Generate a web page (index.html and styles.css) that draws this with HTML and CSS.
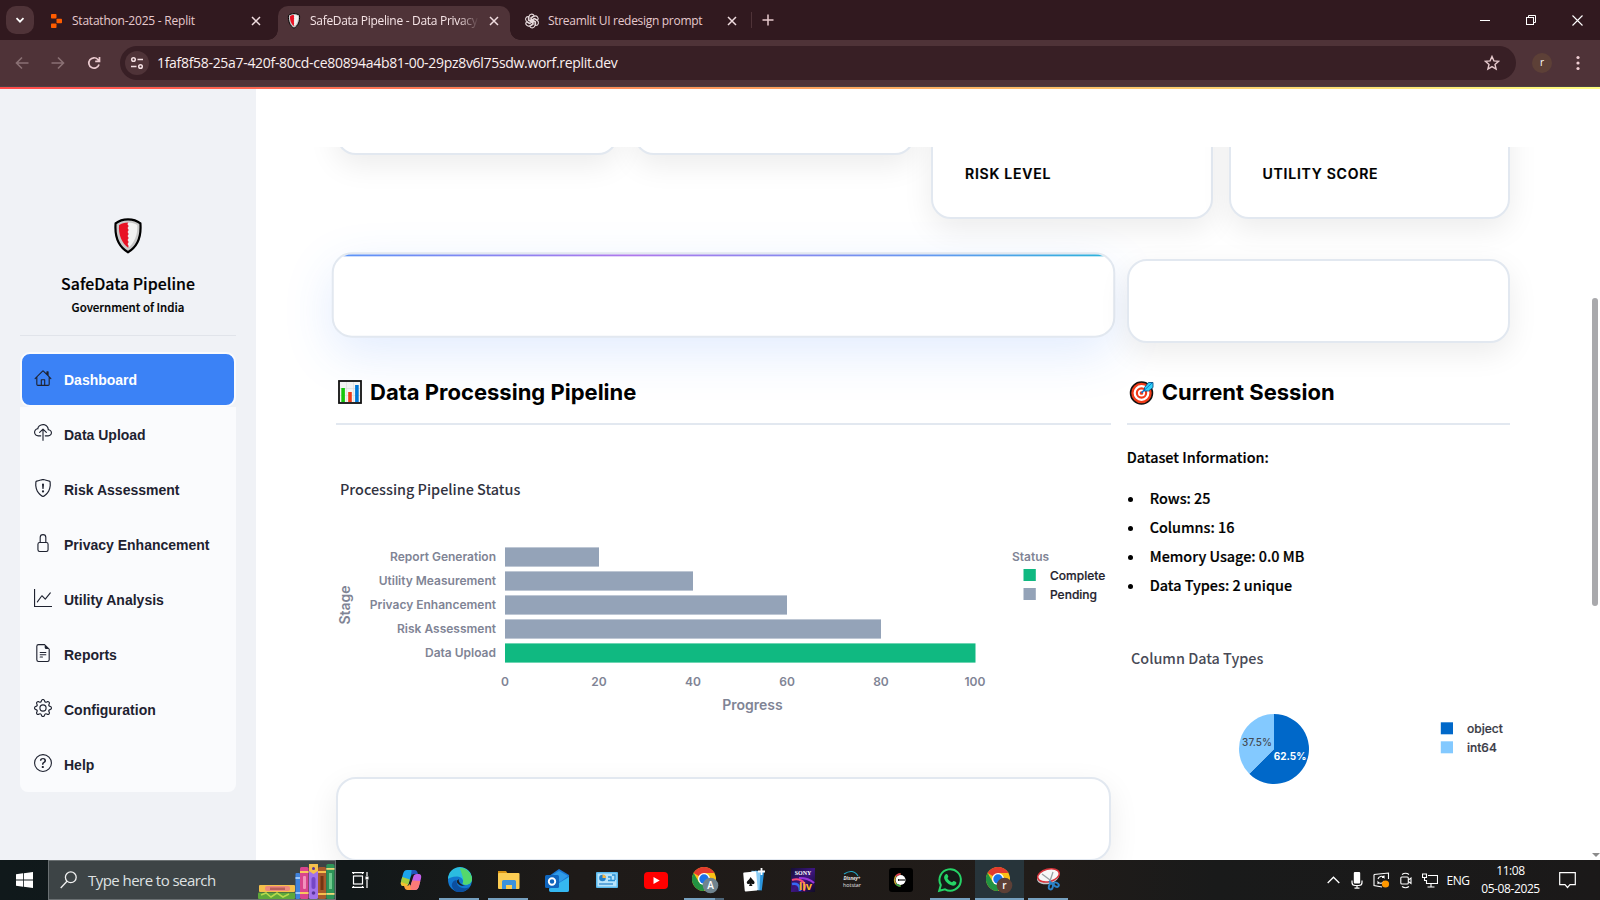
FILE: index.html
```html
<!DOCTYPE html>
<html lang="en">
<head>
<meta charset="utf-8">
<title>SafeData Pipeline - Data Privacy</title>
<link rel="stylesheet" href="styles.css">
</head>
<body>
<svg width="0" height="0" class="defs">
  <defs>
    <symbol id="shield" viewBox="0 0 28 36">
      <path d="M14 1.3C10 1.3 5 2.6 1.6 5.4C.6 18 4.200 28.500 14 34.300C23.800 28.500 27.400 18 26.400 5.400C23 2.600 18 1.300 14 1.300Z" fill="#c9c9c9" stroke="#000" stroke-width="2.200"/>
      <path d="M14.500 4.500C10 4.500 7.500 5.500 5 7.200C4.400 16.500 7.500 25 14.500 30Z" fill="#e81224"/>
      <path d="M14 4.500C18 4.500 21 5.500 23.300 7.200C23.800 16.500 20.500 25 14 30l1-2-1.500-2 1.500-2-1.500-2 1.500-2-1.500-2 1.500-2-1.500-2 1.500-2-1.500-2 1.500-2-1.500-1.500Z" fill="#f2f2f2"/>
    </symbol>
    <symbol id="x" viewBox="0 0 10 10"><path d="M1 1l8 8M9 1l-8 8" stroke="currentColor" stroke-width="1.500" fill="none"/></symbol>
    <symbol id="chrome" viewBox="0 0 24 24">
      <circle cx="12" cy="12" r="12" fill="#fbc116"/>
      <path d="M12 12L1.600 6A12 12 0 0 1 22.400 6L12 6Z" fill="#e33b2e"/>
      <path d="M1.600 6A12 12 0 0 0 12 24L17.200 15L6.800 15Z" fill="#229342"/>
      <circle cx="12" cy="12" r="6" fill="#fff"/><circle cx="12" cy="12" r="4.700" fill="#1a73e8"/>
    </symbol>
  </defs>
</svg>

<header class="tabs">
  <div class="tab-search"><svg width="10" height="10" viewBox="0 0 10 10"><path d="M1.500 3.200L5 6.700l3.500-3.500" fill="none" stroke="#fff" stroke-width="1.700"/></svg></div>
  <div class="tab tab-first">
    <svg class="fav" width="16" height="16" viewBox="0 0 16 16"><g fill="#ff5c00"><rect x="3" y="1" width="5.500" height="4.600" rx=".8"/><rect x="8.500" y="5.700" width="5.500" height="4.600" rx=".8"/><rect x="3" y="10.400" width="5.500" height="4.600" rx=".8"/></g></svg>
    <span class="tab-title">Statathon-2025 - Replit</span>
    <svg class="close" width="10" height="10"><use href="#x"/></svg>
  </div>
  <div class="tab tab-active">
    <svg class="fav" width="16" height="16"><use href="#shield"/></svg>
    <span class="tab-title fade">SafeData Pipeline - Data Privacy</span>
    <svg class="close" width="10" height="10"><use href="#x"/></svg>
  </div>
  <div class="tab tab-third">
    <svg class="fav" width="16" height="16" viewBox="0 0 16 16" fill="none" stroke="#e8dcde" stroke-width="1.100"><g id="petals"><path d="M8 8.800L5 7.100V3.800a2.700 2.700 0 0 1 5.100-1.200L6.900 4.500V8"/><path d="M8 8.800L5 7.100V3.800a2.700 2.700 0 0 1 5.100-1.200L6.900 4.500V8" transform="rotate(60 8 8)"/><path d="M8 8.800L5 7.100V3.800a2.700 2.700 0 0 1 5.100-1.200L6.900 4.500V8" transform="rotate(120 8 8)"/><path d="M8 8.800L5 7.100V3.800a2.700 2.700 0 0 1 5.100-1.200L6.900 4.500V8" transform="rotate(180 8 8)"/><path d="M8 8.800L5 7.100V3.800a2.700 2.700 0 0 1 5.100-1.200L6.900 4.500V8" transform="rotate(240 8 8)"/><path d="M8 8.800L5 7.100V3.800a2.700 2.700 0 0 1 5.100-1.200L6.900 4.500V8" transform="rotate(300 8 8)"/></g></svg>
    <span class="tab-title">Streamlit UI redesign prompt</span>
    <svg class="close" width="10" height="10"><use href="#x"/></svg>
  </div>
  <svg class="newtab" width="12" height="12" viewBox="0 0 12 12"><path d="M6 .5v11M.5 6h11" stroke="#e6c9cd" stroke-width="1.500"/></svg>
  <div class="winctl">
    <svg width="10" height="12" viewBox="0 0 10 12"><path d="M0 6.500h10" stroke="#fff"/></svg>
    <svg width="12" height="12" viewBox="0 0 12 12" fill="none" stroke="#fff"><rect x="1.500" y="3.500" width="7" height="7"/><path d="M3.500 3.500v-2h7v7h-2"/></svg>
    <svg width="11" height="11" viewBox="0 0 11 11"><path d="M.5.5l10 10M10.500.5l-10 10" stroke="#fff" stroke-width="1.100"/></svg>
  </div>
</header>

<div class="toolbar">
  <svg class="nav-btn" width="14" height="14" viewBox="0 0 14 14" fill="none" stroke="#8a7074" stroke-width="1.600"><path d="M13.500 7H1.500M7 1.500L1.500 7 7 12.500"/></svg>
  <svg class="nav-btn" width="14" height="14" viewBox="0 0 14 14" fill="none" stroke="#8a7074" stroke-width="1.600"><path d="M.5 7h12M7 1.500L12.500 7 7 12.500"/></svg>
  <svg class="nav-btn" width="14" height="14" viewBox="0 0 14 14" fill="none" stroke="#eccbd0" stroke-width="1.700"><path d="M12 8.500A5.200 5.200 0 1 1 10.900 3.500L12.300 5M12.500 1v4.300H8.200"/></svg>
  <div class="address">
    <span class="site"><svg width="14" height="14" viewBox="0 0 14 14" fill="none" stroke="#f3dfe2" stroke-width="1.500"><circle cx="3.500" cy="3.500" r="1.800"/><path d="M7.500 3.500H13M1 10.500h5.500"/><circle cx="10.500" cy="10.500" r="1.800"/></svg></span>
    <span class="url">1faf8f58-25a7-420f-80cd-ce80894a4b81-00-29pz8v6l75sdw.worf.replit.dev</span>
    <svg class="star" width="16" height="16" viewBox="0 0 16 16"><path d="M8 1.500l1.900 4.400 4.700.4-3.600 3.100 1.100 4.700L8 11.600l-4.100 2.500L5 9.400 1.400 6.300l4.700-.4z" fill="none" stroke="#e6c9cd" stroke-width="1.400"/></svg>
  </div>
  <span class="avatar">r</span>
  <svg class="dots" width="4" height="16" viewBox="0 0 4 16" fill="#f0cfd4"><circle cx="2" cy="2.500" r="1.600"/><circle cx="2" cy="8" r="1.600"/><circle cx="2" cy="13.500" r="1.600"/></svg>
</div>
<div class="rainbow"></div>

<div class="page">
  <aside class="sidebar">
    <svg class="logo" width="28" height="36"><use href="#shield"/></svg>
    <div class="brand">SafeData Pipeline</div>
    <div class="gov">Government of India</div>
    <nav class="menu">
      <a class="item on"><svg viewBox="0 0 16 16"><path d="M8.707 1.500a1 1 0 0 0-1.414 0L.646 8.146a.5.5 0 0 0 .708.708L2 8.207V13.500A1.500 1.500 0 0 0 3.500 15h9a1.500 1.500 0 0 0 1.500-1.500V8.207l.646.647a.5.5 0 0 0 .708-.708L13 5.793V2.500a.5.5 0 0 0-.5-.5h-1a.5.5 0 0 0-.5.500v1.293zM13 7.207V13.500a.5.5 0 0 1-.5.500H10V9.500a.5.5 0 0 0-.5-.5h-3a.5.5 0 0 0-.5.500V14H3.500a.5.5 0 0 1-.5-.5V7.207l5-5zM7 14v-4h2v4z" fill-rule="evenodd"/></svg><span>Dashboard</span></a>
      <a class="item"><svg viewBox="0 0 16 16"><path fill-rule="evenodd" d="M4.406 1.342A5.530 5.530 0 0 1 8 0c2.690 0 4.923 2 5.166 4.579C14.758 4.804 16 6.137 16 7.773 16 9.569 14.502 11 12.687 11H10a.5.5 0 0 1 0-1h2.688C13.979 10 15 8.988 15 7.773c0-1.216-1.020-2.228-2.313-2.228h-.5v-.5C12.188 2.825 10.328 1 8 1a4.530 4.530 0 0 0-2.941 1.100c-.757.652-1.153 1.438-1.153 2.055v.448l-.445.049C2.064 4.805 1 5.952 1 7.318 1 8.785 2.230 10 3.781 10H6a.5.5 0 0 1 0 1H3.781C1.708 11 0 9.366 0 7.318c0-1.763 1.266-3.223 2.942-3.593.143-.863.698-1.723 1.464-2.383"/><path fill-rule="evenodd" d="M7.646 4.146a.5.5 0 0 1 .708 0l3 3a.5.5 0 0 1-.708.708L8.500 5.707V14.500a.5.5 0 0 1-1 0V5.707L5.354 7.854a.5.5 0 1 1-.708-.708z"/></svg><span>Data Upload</span></a>
      <a class="item"><svg viewBox="0 0 16 16"><path d="M5.338 1.590a61 61 0 0 0-2.837.856.480.480 0 0 0-.328.390c-.554 4.157.726 7.190 2.253 9.188a10.700 10.700 0 0 0 2.287 2.233c.346.244.652.420.893.533q.180.085.293.118a1 1 0 0 0 .101.025 1 1 0 0 0 .1-.025q.114-.034.294-.118c.240-.113.547-.290.893-.533a10.700 10.700 0 0 0 2.287-2.233c1.527-1.997 2.807-5.031 2.253-9.188a.480.480 0 0 0-.328-.390c-.651-.213-1.750-.560-2.837-.855C9.552 1.290 8.531 1.067 8 1.067c-.530 0-1.552.223-2.662.524zM5.072.560C6.157.265 7.310 0 8 0s1.843.265 2.928.560c1.110.300 2.229.655 2.887.870a1.540 1.540 0 0 1 1.044 1.262c.596 4.477-.787 7.795-2.465 9.990a11.800 11.800 0 0 1-2.517 2.453 7 7 0 0 1-1.048.625c-.280.132-.581.240-.829.240s-.548-.108-.829-.240a7 7 0 0 1-1.048-.625 11.800 11.800 0 0 1-2.517-2.453C1.928 10.487.545 7.169 1.141 2.692A1.540 1.540 0 0 1 2.185 1.430 63 63 0 0 1 5.072.560"/><path d="M7.001 11a1 1 0 1 1 2 0 1 1 0 0 1-2 0M7.100 4.995a.905.905 0 1 1 1.800 0l-.350 3.507a.553.553 0 0 1-1.100 0z"/></svg><span>Risk Assessment</span></a>
      <a class="item"><svg viewBox="0 0 16 16"><path d="M8 1a2 2 0 0 1 2 2v4H6V3a2 2 0 0 1 2-2m3 6V3a3 3 0 0 0-6 0v4a2 2 0 0 0-2 2v5a2 2 0 0 0 2 2h6a2 2 0 0 0 2-2V9a2 2 0 0 0-2-2M5 8h6a1 1 0 0 1 1 1v5a1 1 0 0 1-1 1H5a1 1 0 0 1-1-1V9a1 1 0 0 1 1-1"/></svg><span>Privacy Enhancement</span></a>
      <a class="item"><svg viewBox="0 0 16 16"><path fill-rule="evenodd" d="M0 0h1v15h15v1H0zm14.817 3.113a.5.5 0 0 1 .070.704l-4.500 5.500a.5.5 0 0 1-.740.037L7.060 6.767l-3.656 5.027a.5.5 0 0 1-.808-.588l4-5.500a.5.5 0 0 1 .758-.060l2.609 2.610 4.150-5.073a.5.5 0 0 1 .704-.070"/></svg><span>Utility Analysis</span></a>
      <a class="item"><svg viewBox="0 0 16 16"><path d="M5.500 7a.5.5 0 0 0 0 1h5a.5.5 0 0 0 0-1zM5 9.500a.5.5 0 0 1 .5-.5h5a.5.5 0 0 1 0 1h-5a.5.5 0 0 1-.5-.5m0 2a.5.5 0 0 1 .5-.5h2a.5.5 0 0 1 0 1h-2a.5.5 0 0 1-.5-.5"/><path d="M9.500 0H4a2 2 0 0 0-2 2v12a2 2 0 0 0 2 2h8a2 2 0 0 0 2-2V4.500zm0 1v2A1.500 1.500 0 0 0 11 4.500h2V14a1 1 0 0 1-1 1H4a1 1 0 0 1-1-1V2a1 1 0 0 1 1-1z"/></svg><span>Reports</span></a>
      <a class="item"><svg viewBox="0 0 16 16"><path d="M8 4.754a3.246 3.246 0 1 0 0 6.492 3.246 3.246 0 0 0 0-6.492M5.754 8a2.246 2.246 0 1 1 4.492 0 2.246 2.246 0 0 1-4.492 0"/><path d="M9.796 1.343c-.527-1.790-3.065-1.790-3.592 0l-.094.319a.873.873 0 0 1-1.255.520l-.292-.160c-1.640-.892-3.433.902-2.540 2.541l.159.292a.873.873 0 0 1-.520 1.255l-.319.094c-1.790.527-1.790 3.065 0 3.592l.319.094a.873.873 0 0 1 .520 1.255l-.160.292c-.892 1.640.901 3.434 2.541 2.540l.292-.159a.873.873 0 0 1 1.255.520l.094.319c.527 1.790 3.065 1.790 3.592 0l.094-.319a.873.873 0 0 1 1.255-.520l.292.160c1.640.893 3.434-.902 2.540-2.541l-.159-.292a.873.873 0 0 1 .520-1.255l.319-.094c1.790-.527 1.790-3.065 0-3.592l-.319-.094a.873.873 0 0 1-.520-1.255l.160-.292c.893-1.640-.902-3.433-2.541-2.540l-.292.159a.873.873 0 0 1-1.255-.520zm-2.633.283c.246-.835 1.428-.835 1.674 0l.094.319a1.873 1.873 0 0 0 2.693 1.115l.291-.160c.764-.415 1.600.420 1.184 1.185l-.159.292a1.873 1.873 0 0 0 1.116 2.692l.318.094c.835.246.835 1.428 0 1.674l-.319.094a1.873 1.873 0 0 0-1.115 2.693l.160.291c.415.764-.420 1.600-1.185 1.184l-.291-.159a1.873 1.873 0 0 0-2.693 1.116l-.094.318c-.246.835-1.428.835-1.674 0l-.094-.319a1.873 1.873 0 0 0-2.692-1.115l-.292.160c-.764.415-1.600-.420-1.184-1.185l.159-.291A1.873 1.873 0 0 0 1.945 8.930l-.319-.094c-.835-.246-.835-1.428 0-1.674l.319-.094A1.873 1.873 0 0 0 3.060 4.377l-.160-.292c-.415-.764.420-1.600 1.185-1.184l.292.159a1.873 1.873 0 0 0 2.692-1.115z"/></svg><span>Configuration</span></a>
      <a class="item"><svg viewBox="0 0 16 16"><path d="M8 15A7 7 0 1 1 8 1a7 7 0 0 1 0 14m0 1A8 8 0 1 0 8 0a8 8 0 0 0 0 16"/><path d="M5.255 5.786a.237.237 0 0 0 .241.247h.825c.138 0 .248-.113.266-.250.090-.656.540-1.134 1.342-1.134.686 0 1.314.343 1.314 1.168 0 .635-.374.927-.965 1.371-.673.489-1.206 1.060-1.168 1.987l.003.217a.250.250 0 0 0 .250.246h.811a.250.250 0 0 0 .250-.250v-.105c0-.718.273-.927 1.010-1.486.609-.463 1.244-.977 1.244-2.056 0-1.511-1.276-2.241-2.673-2.241-1.267 0-2.655.590-2.750 2.286m1.557 5.763c0 .533.425.927 1.010.927.609 0 1.028-.394 1.028-.927 0-.552-.420-.940-1.029-.940-.584 0-1.009.388-1.009.940"/></svg><span>Help</span></a>
    </nav>
  </aside>

  <main class="main">
    <div class="scroll">
      <section class="metrics">
        <div class="card short"></div>
        <div class="card short"></div>
        <div class="card tall"><span>RISK LEVEL</span></div>
        <div class="card tall"><span>UTILITY SCORE</span></div>
      </section>
      <section class="cols">
        <div class="col">
          <div class="card blank lifted"></div>
          <h2 class="head"><svg width="24" height="24" viewBox="0 0 24 24"><rect x="1" y="1" width="22" height="22" fill="#f3f3f3" stroke="#111" stroke-width="1.800"/><path d="M2 8.500h20M2 15.500h20M8.500 2v20M15.500 2v20" stroke="#dcdcdc" stroke-width=".7"/><rect x="3.300" y="8" width="3.600" height="14" fill="#16c60c"/><rect x="10.200" y="12" width="3.600" height="10" fill="#f03a17"/><rect x="17.100" y="5" width="3.600" height="17" fill="#0078d7"/></svg><span>Data Processing Pipeline</span></h2>
          <svg class="chart" width="775" height="352" viewBox="336 425 775 352">
            <text class="ctitle" x="340" y="495">Processing Pipeline Status</text>
            <g fill="#94a3b8">
              <rect x="505" y="547.400" width="94" height="19.200"/>
              <rect x="505" y="571.400" width="188" height="19.200"/>
              <rect x="505" y="595.400" width="282" height="19.200"/>
              <rect x="505" y="619.400" width="376" height="19.200"/>
            </g>
            <rect x="505" y="643.400" width="470.500" height="19.200" fill="#10b981"/>
            <g class="axis" text-anchor="end">
              <text x="496" y="561">Report Generation</text>
              <text x="496" y="585">Utility Measurement</text>
              <text x="496" y="609">Privacy Enhancement</text>
              <text x="496" y="633">Risk Assessment</text>
              <text x="496" y="657">Data Upload</text>
            </g>
            <g class="axis" text-anchor="middle">
              <text x="505" y="686">0</text><text x="599" y="686">20</text><text x="693" y="686">40</text>
              <text x="787" y="686">60</text><text x="881" y="686">80</text><text x="975" y="686">100</text>
            </g>
            <text class="axis-name" x="752.500" y="710" text-anchor="middle">Progress</text>
            <text class="axis-name" transform="translate(350 605) rotate(-90)" text-anchor="middle">Stage</text>
            <text class="axis" x="1012" y="561">Status</text>
            <rect x="1023.500" y="569" width="12.300" height="12" fill="#10b981"/>
            <rect x="1023.500" y="588" width="12.300" height="12" fill="#94a3b8"/>
            <text class="legend" x="1050" y="580">Complete</text>
            <text class="legend" x="1050" y="599">Pending</text>
          </svg>
          <div class="card blank"></div>
        </div>
        <div class="col">
          <div class="card blank"></div>
          <h2 class="head"><svg class="target" width="25" height="25" viewBox="0 0 25 25"><circle cx="12.500" cy="13" r="11" fill="#f03a17" stroke="#111" stroke-width="1.500"/><circle cx="12.500" cy="13" r="6.800" fill="none" stroke="#fff" stroke-width="2.200"/><circle cx="12.500" cy="13" r="2.700" fill="#f03a17" stroke="#fff" stroke-width="1.700"/><path d="M12.500 13L19 6" stroke="#0078d7" stroke-width="1.600"/><path d="M15.500 7.500L19.500 2.500h4.500v5l-4.500 3.500h-4z" fill="#31d2f7" stroke="#0b4f86" stroke-width=".9"/><path d="M15 10.500L23 3" stroke="#0078d7"/></svg><span>Current Session</span></h2>
          <div class="info">
            <p>Dataset Information:</p>
            <ul>
              <li>Rows: 25</li>
              <li>Columns: 16</li>
              <li>Memory Usage: 0.0 MB</li>
              <li>Data Types: 2 unique</li>
            </ul>
          </div>
          <svg class="chart" width="383" height="200" viewBox="1127 620 383 200">
            <text class="ctitle light" x="1131" y="664">Column Data Types</text>
            <path d="M1274 749V714A35 35 0 1 1 1249.250 773.750Z" fill="#0068c9"/>
            <path d="M1274 749L1249.250 773.750A35 35 0 0 1 1274 714Z" fill="#83c9ff"/>
            <text class="pct" x="1257" y="746" text-anchor="middle" fill="#444b55">37.5%</text>
            <text class="pct strong" x="1290" y="760" text-anchor="middle" fill="#fff">62.5%</text>
            <rect x="1440.800" y="722.300" width="12.200" height="12" fill="#0068c9"/>
            <rect x="1440.800" y="741.300" width="12.200" height="12" fill="#83c9ff"/>
            <text class="legend soft" x="1467" y="733">object</text>
            <text class="legend soft" x="1467" y="752">int64</text>
          </svg>
        </div>
      </section>
    </div>
    <div class="thumb"></div>
    <svg class="arrow" width="8" height="4" viewBox="0 0 8 4"><path d="M0 0h8L4 4z" fill="#8b8b8b"/></svg>
  </main>
</div>

<footer class="taskbar">
  <div class="start"><svg width="17" height="16" viewBox="0 0 17 16" fill="#fff"><path d="M0 2.300L7 1.300V7.600H0zM7.800 1.200L17 0V7.600H7.800zM0 8.400H7V14.700L0 13.700zM7.800 8.400H17V16L7.800 14.800z"/></svg></div>
  <div class="search">
    <svg width="17" height="18" viewBox="0 0 17 18" fill="none" stroke="#f2f2f2" stroke-width="1.300"><circle cx="10.800" cy="6.300" r="5.400"/><path d="M7 10.200L.7 17"/></svg>
    <span>Type here to search</span>
    <svg class="books" width="77" height="35" viewBox="0 0 77 35">
      <rect x="1" y="21" width="36" height="7" rx="1" fill="#f5c04c"/><rect x="7" y="22" width="25" height="5" rx="2" fill="#ef8a7c"/><rect x="12" y="23.500" width="15" height="2.500" fill="#b9605c"/>
      <rect x="0" y="28.500" width="37" height="6.500" rx="1" fill="#5ea83a"/><path d="M3 31l5-2 5 4 6-4 6 4 6-3" stroke="#b6d94c" stroke-width="1.600" fill="none"/>
      <rect x="37.500" y="9" width="4.500" height="26" rx="1" fill="#3f83dd"/><rect x="37.500" y="13" width="4.500" height="2" fill="#9cc8fa"/><rect x="37.500" y="28" width="4.500" height="2" fill="#9cc8fa"/>
      <rect x="42" y="3" width="8.500" height="32" rx="1.500" fill="#d9458d"/><rect x="42" y="7" width="8.500" height="2" fill="#f9c75e"/><rect x="42" y="28" width="8.500" height="2" fill="#f9c75e"/><rect x="45" y="12" width="3" height="13" rx="1" fill="#f291bd"/>
      <rect x="51" y="0" width="9" height="35" rx="1.500" fill="#a272ea"/><path d="M51 0h9v7l-4.500 3L51 7z" fill="#f5c04c"/><circle cx="55.500" cy="4.500" r="1.500" fill="#5a3599"/><rect x="53.500" y="13" width="4" height="12" rx="2" fill="#7547c7"/><circle cx="55.500" cy="29" r="1.800" fill="#5a3599"/>
      <rect x="60" y="3" width="8" height="32" rx="1.500" fill="#a85a2c"/><rect x="60" y="7" width="8" height="2" fill="#f5c04c"/><rect x="60" y="29" width="8" height="2" fill="#f5c04c"/><rect x="62.500" y="12" width="3" height="14" fill="#733513"/>
      <rect x="68.300" y="0" width="8.200" height="35" rx="1.500" fill="#2d9458"/><rect x="68.300" y="4" width="8.200" height="1.800" fill="#f0d779"/><rect x="68.300" y="29" width="8.200" height="1.800" fill="#f0d779"/><rect x="71" y="9" width="3" height="16" fill="#6fc98d"/>
    </svg>
  </div>
  <div class="apps">
    <div class="app"><svg width="17" height="16" viewBox="0 0 17 16" fill="none" stroke="#fff" stroke-width="1.200"><rect x="1.500" y="4" width="9" height="8"/><path d="M0 .6h12M0 15.400h12M1.500 2V.6M10.500 2V.6M1.500 14v1.400M10.500 14v1.400M15 0v4M15 8v8"/><rect x="13.500" y="4.500" width="3" height="3" fill="#fff" stroke="none"/></svg></div>
    <div class="app"><svg width="22" height="22" viewBox="0 0 22 22"><path d="M7 1h7.500c-1.800 0-2.300 1.500-2.800 3.500L8.800 14c-.7 2.200-1.500 3-3.600 3H3.500C1 17 .3 15 1 12.500L3 5c.8-2.800 1.800-4 4-4z" fill="#1ba5ec"/><path d="M2.200 8L1 12.500C.3 15 1 17 3.500 17h1.700c2.100 0 2.900-.8 3.600-3l1-3.500z" fill="#a4cf3c"/><path d="M1 13c-.5 2.500.5 4 2.500 4h1.700c1.500 0 2.400-.5 3-1.600z" fill="#f2c230"/><path d="M11.500 1h3c1.800 0 2.500 1 3 2.500l.5 1.500h-3c-2 0-2.500 0-3.500 2z" fill="#2355bd"/><path d="M15 21H7.500c1.800 0 2.300-1.500 2.800-3.500L13.200 8c.7-2.200 1.500-3 3.600-3h1.700C21 5 21.700 7 21 9.500L19 17c-.8 2.800-1.800 4-4 4z" fill="#c361ea"/><path d="M15 21H7.500c1.800 0 2.300-1.500 2.800-3.500L12.200 11.500 20.300 12 19 17c-.8 2.800-1.800 4-4 4z" fill="#fb7a78"/><path d="M10.500 21h-3c-1.800 0-2.500-1-3-2.500L4 17h1.200c2.100 0 3.300 0 4.300-2l1 1.500z" fill="#fda43e"/></svg></div>
    <div class="app run"><svg width="24" height="24" viewBox="0 0 24 24"><circle cx="12" cy="12" r="12" fill="#1277cf"/><path d="M0 11A12 12 0 0 1 24 11C24 17 16 18 14.500 15.500C16.500 13 14 8.500 9 8.500C4 8.500 1 10 0 11Z" fill="#2bbce0"/><path d="M12 0A12 12 0 0 1 24 11C24 17 16 18 14.500 15.500C17 12 13 5 12 0Z" fill="#55d86c"/><path d="M8.500 12C8 18 13 22 21.500 19.300C18 24 12 25 7.500 23.200C2 19 3 13 8.500 12Z" fill="#0c4f9f"/><path d="M11 11c-1 2 1 6 6 6.600-3 1-9-1-8-5z" fill="#1b1d1f"/></svg></div>
    <div class="app run"><svg width="23" height="20" viewBox="0 0 23 20"><path d="M1 1h8l2 3H1z" fill="#d99413"/><rect x="1" y="3" width="21.500" height="16" rx="1" fill="#fccd53"/><path d="M5 19v-7.500q0-1.500 1.500-1.500h11q1.500 0 1.500 1.500V19h-4v-4H9v4z" fill="#3c92dd"/></svg></div>
    <div class="app"><svg width="25" height="23" viewBox="0 0 25 23"><path d="M4 7L14 0l10 6v15q0 2-2 2H6q-2 0-2-2z" fill="#1a78d4"/><path d="M6 7l8-5 9 5-8 6z" fill="#2f9be8"/><path d="M4 20l20-12v13q0 2-2 2H6q-2 0-2-3z" fill="#35b8f1"/><rect x="0" y="6" width="14" height="13" rx="1.500" fill="#0f65bd"/><circle cx="7" cy="12.500" r="3.200" fill="none" stroke="#fff" stroke-width="1.900"/></svg></div>
    <div class="app"><svg width="22" height="16" viewBox="0 0 22 16"><rect x="0" y="0" width="22" height="16" rx="1" fill="#58b9ee"/><rect x="1.500" y="1.500" width="19" height="13" fill="#b7e3fa"/><circle cx="6.500" cy="6" r="3.300" fill="#2380c9"/><path d="M6.500 6V2.500A3.500 3.500 0 0 1 10 6z" fill="#f6b547"/><path d="M12 8.500h7M12 5h3v3M16 3h3v5" stroke="#2a90d4" fill="none" stroke-width="1.300"/><path d="M3 12h14" stroke="#2380c9" stroke-width="1.200"/></svg></div>
    <div class="app"><svg width="24" height="17" viewBox="0 0 24 17"><rect width="24" height="17" rx="4" fill="#f00"/><path d="M9.500 5v7l6.200-3.500z" fill="#fff"/></svg></div>
    <div class="app run split"><svg width="26" height="26" viewBox="0 0 26 26"><use href="#chrome" width="24" height="24"/><circle cx="18.500" cy="18.500" r="7.800" fill="#70848f"/><text x="18.500" y="22" class="badge" text-anchor="middle">A</text></svg></div>
    <div class="app"><svg width="22" height="24" viewBox="0 0 22 24"><rect x="11" y="3" width="9" height="19" fill="#2b95dc" transform="rotate(7 15 12)"/><rect x="8" y="3" width="9" height="19" fill="#8bcdf5" transform="rotate(3 12 12)"/><rect x="1" y="4" width="13" height="19" rx="1" fill="#fff" transform="rotate(-5 7 14)"/><path d="M7.500 9c2 3 4.500 4 4 6-.4 1.500-2.200 1.500-3.200.5l1.200 2.500H6l1-2.500c-1 1-3 .8-3.200-.7C3.500 13 6.500 12 7.500 9z" fill="#111"/><path d="M18.500 0v7M15 3.500h7" stroke="#fff" stroke-width="1.800"/></svg></div>
    <div class="app"><svg width="24" height="24" viewBox="0 0 24 24"><defs><linearGradient id="sony" x2="1" y2="1"><stop offset="0" stop-color="#150f35"/><stop offset=".5" stop-color="#3d1580"/><stop offset="1" stop-color="#110c25"/></linearGradient></defs><rect width="24" height="24" fill="url(#sony)"/><path d="M1 12c7-2 13 1 13 7l-1 4" stroke="#f3487b" stroke-width="2" fill="none"/><path d="M1 16c5-1 8 1 8 7" stroke="#3569f4" stroke-width="2.500" fill="none"/><path d="M8 10c7 0 12 2 15 5" stroke="#9b36db" stroke-width="2" fill="none"/><text class="sony" x="12" y="7" text-anchor="middle">SONY</text><text class="liv" x="14.500" y="22" text-anchor="middle">liv</text></svg></div>
    <div class="app"><svg width="22" height="20" viewBox="0 0 22 20"><path d="M3 4Q12-2 17 6" stroke="#22a9c9" stroke-width="1.100" fill="none"/><text class="hot it" x="11" y="10" text-anchor="middle" textLength="17" lengthAdjust="spacingAndGlyphs">Disney+</text><text class="hot" x="11" y="16.500" text-anchor="middle" textLength="18" lengthAdjust="spacingAndGlyphs">hotstar</text></svg></div>
    <div class="app"><svg width="24" height="24" viewBox="0 0 24 24"><rect width="24" height="24" rx="3" fill="#000"/><circle cx="11.500" cy="12" r="5" fill="#fff"/><path d="M11.500 6a6 6 0 0 0 0 12" fill="none" stroke="#c8a432" stroke-width="1.400"/><path d="M7 8a6 6 0 0 1 4.500-2" fill="none" stroke="#de3153" stroke-width="1.400"/><path d="M7 16a6 6 0 0 0 4.500 2" fill="none" stroke="#36a84b" stroke-width="1.400"/><rect x="9" y="11" width="8" height="2" fill="#222"/><path d="M10 12h7" stroke="#ccc" stroke-width=".9"/></svg></div>
    <div class="app run"><svg width="24" height="24" viewBox="0 0 24 24"><path d="M1.200 22.800l1.600-5.700A10.700 10.700 0 1 1 7 21.300z" fill="#151a18" stroke="#25d366" stroke-width="2"/><path d="M7.500 6.500c1.500-1.200 2.200.3 2.800 2 .3.800-1 1.500-.7 2 1 1.800 2.300 3 4.200 3.700.7.200 1.200-1.500 2-1.200 2 .8 3 1.200 2.500 2.500-.8 2.200-3 2.500-5 1.800-3.500-1.200-5.500-3.300-6.800-6-.8-1.800-.4-3.600 1-4.800z" fill="#25d366"/></svg></div>
    <div class="app run current"><svg width="26" height="26" viewBox="0 0 26 26"><use href="#chrome" width="24" height="24"/><circle cx="18.500" cy="18.500" r="7.800" fill="#5d4037"/><text x="18.500" y="22" class="badge" text-anchor="middle">r</text></svg></div>
    <div class="app run"><svg width="24" height="24" viewBox="0 0 24 24"><ellipse cx="12" cy="9" rx="11.300" ry="7" fill="#c5cace" transform="rotate(-14 12 9)"/><ellipse cx="12.500" cy="7.500" rx="11" ry="6.300" fill="#f7f7f7" stroke="#d8343b" stroke-width="1.500" transform="rotate(-14 12 7.500)"/><path d="M6 6l8 6M17 4l-3 9" stroke="#9aa0a4" stroke-width="1.300"/><g fill="none" stroke="#2b83c9" stroke-width="1.900"><path d="M13 13l5 4"/><ellipse cx="15" cy="18.500" rx="2" ry="3" transform="rotate(15 15 18)"/><ellipse cx="20.500" cy="16.500" rx="2.800" ry="1.900" transform="rotate(30 20 16)"/></g></svg></div>
  </div>
  <div class="tray">
    <svg class="t1" width="13" height="8" viewBox="0 0 13 8"><path d="M.7 7l5.800-5.800L12.300 7" fill="none" stroke="#fff" stroke-width="1.300"/></svg>
    <svg class="t2" width="12" height="17" viewBox="0 0 12 17"><rect x="2.800" y="0" width="6.400" height="11.500" rx="1" fill="#fff"/><path d="M1 8.500v2q0 3 3 3h4q3 0 3-3v-2M6 13.500V16M3.500 16.200h5" fill="none" stroke="#fff" stroke-width="1.200"/></svg>
    <svg class="t3" width="17" height="16" viewBox="0 0 17 16"><path d="M1 2.500L15.500 1v6M1 2.500v11l8 1.500" fill="none" stroke="#fff" stroke-width="1.100"/><path d="M5 7a3.500 3.500 0 0 1 6-1.500V3.500M11 5.500H9M11 9a3.500 3.500 0 0 1-6 1V12" fill="none" stroke="#fff" stroke-width="1.100"/><circle cx="12.500" cy="12" r="3.600" fill="#ff9800"/></svg>
    <svg class="t4" width="12" height="17" viewBox="0 0 12 17" fill="none" stroke="#fff" stroke-width="1.100"><rect x=".8" y="5" width="7.500" height="7" rx="1"/><path d="M8.300 8L11 6v5.500L8.300 9.500M2 2.500Q5.500 0 9 2.500M2 14.500Q5.500 17 9 14.500"/></svg>
    <svg class="t5" width="16" height="15" viewBox="0 0 16 15" fill="none" stroke="#fff" stroke-width="1.100"><path d="M6 2.500h9.500v8H4.500V7M9 10.500V14M5.500 14h7"/><path d="M.5 1h4v3.500h-4zM2.500 4.500v3H4.500"/></svg>
    <span class="lang">ENG</span>
    <div class="clock"><span>11:08</span><span>05-08-2025</span></div>
    <svg class="t6" width="17" height="17" viewBox="0 0 17 17"><path d="M.7.700h15.600v12H11L8.500 15.500 6 12.700H.7z" fill="none" stroke="#fff" stroke-width="1.200"/></svg>
  </div>
</footer>
</body>
</html>
```
FILE: styles.css
```css
* { box-sizing: border-box; }
body { margin: 0; width: 1600px; height: 900px; overflow: hidden; display: flex; flex-direction: column; background: #fff; font-family: "Open Sans", "Noto Sans", sans-serif; }
svg { flex: none; display: block; }
.defs { position: absolute; }

/* browser window */
.tabs { height: 40px; flex: none; background: #31191f; display: flex; align-items: center; color: #e6c9cd; font-size: 12px; }
.tab-search { width: 28px; height: 28px; margin-left: 6px; border-radius: 10px; background: #4f3338; display: grid; place-items: center; }
.tab { height: 34px; margin-top: 6px; padding-bottom: 5px; display: flex; align-items: center; }
.tab .fav { margin-right: 8px; }
.tab-title { flex: 1; white-space: nowrap; overflow: hidden; letter-spacing: -.3px; }
.tab .close { margin-left: 10px; color: #f0dde0; }
.tab-first { width: 244px; padding-left: 14px; padding-right: 17px; }
.tab-first .tab-title { letter-spacing: -.22px; }
.tab-active { width: 232px; background: #4f3338; border-radius: 10px 10px 0 0; padding-left: 8px; padding-right: 11px; color: #f6e4e6; position: relative; }
.tab-active::before, .tab-active::after { content: ""; position: absolute; bottom: 0; width: 10px; height: 10px; }
.tab-active::before { left: -10px; background: radial-gradient(circle at 0 0, transparent 9.500px, #4f3338 10px); }
.tab-active::after { right: -10px; background: radial-gradient(circle at 100% 0, transparent 9.500px, #4f3338 10px); }
.fade { -webkit-mask-image: linear-gradient(90deg, #000 88%, transparent); mask-image: linear-gradient(90deg, #000 88%, transparent); }
.tab-third { width: 241px; padding-left: 14px; padding-right: 14px; }
.newtab { box-sizing: content-box; padding: 2px 0 2px 10px; border-left: 1px solid #4f3338; }
.winctl { margin-left: auto; display: flex; align-items: center; gap: 35px; padding-right: 17px; }
.toolbar { height: 47px; flex: none; background: #4f3338; display: flex; align-items: center; padding: 0 20px 1px 15px; box-shadow: inset 0 -1px #4a4145; }
.nav-btn { margin-right: 22px; }
.address { flex: none; width: 1396px; height: 34px; margin-left: -3px; border-radius: 17px; background: #381f25; display: flex; align-items: center; padding: 0 16px 0 5px; }
.site { width: 24px; height: 24px; border-radius: 50%; background: #4f3338; display: grid; place-items: center; margin-right: 8px; }
.url { flex: 1; color: #fbeff0; font-size: 14px; letter-spacing: -.31px; padding-bottom: 1px; }
.avatar { width: 20px; height: 20px; border-radius: 50%; background: #5d4037; color: #fff; font-size: 10px; line-height: 19px; text-align: center; margin-left: 16px; }
.dots { margin-left: 24px; }
.rainbow { height: 2px; flex: none; background: linear-gradient(90deg, #ff4b4b, #ffa35f 50%, #fffd80); }

.page { flex: 1; min-height: 0; display: flex; }

/* sidebar */
.sidebar { width: 256px; flex: none; background: #f0f2f6; padding: 129px 20px 0; display: flex; flex-direction: column; align-items: center; color: #000; font-family: "Noto Sans CJK SC", sans-serif; font-weight: 500; }
.brand { margin-top: 17px; height: 26px; line-height: 26px; font-size: 15.900px; -webkit-text-stroke: .2px #000; white-space: nowrap; }
.gov { height: 20px; line-height: 20px; font-size: 11.500px; -webkit-text-stroke: .2px #000; white-space: nowrap; }
.menu { margin-top: 18px; width: 216px; height: 457px; border-top: 1px solid #e1e4ea; padding-top: 16px; display: flex; flex-direction: column; }
.item { flex: none; height: 55px; background: #fafbfd; padding: 0 12px 1px 14px; display: flex; align-items: center; font: bold 14px "Liberation Sans", Arial, sans-serif; color: #1e2230; white-space: nowrap; }
.item svg { width: 18px; height: 18px; margin: -3px 12px 0 0; fill: #1e2230; }
.item span { padding-top: 2px; }
.item.on { background: #3b82f6; color: #fff; border-radius: 10px; border: 2px solid #fafbfd; padding: 0 12px; height: 55px; }
.item.on span { padding-top: 0; }
.item:last-child { border-radius: 0 0 8px 8px; }

/* main area */
.main { flex: 1; min-width: 0; padding-top: 58px; position: relative; }
.scroll { height: 713px; overflow: hidden; padding: 0 90px 0 80px; }
.card { border: 2px solid #e2e8f0; border-radius: 20px; background: #fff; box-shadow: 0 10px 30px rgba(0, 0, 0, .08); }
.metrics { display: grid; grid-template-columns: repeat(4, 1fr); gap: 16px; margin-top: -100px; align-items: start; }
.short { height: 108px; }
.tall { height: 172px; padding: 116px 0 0 32px; font: 600 14px/18px Inter, sans-serif; letter-spacing: .76px; -webkit-text-stroke: .2px #000; }
.cols { display: grid; grid-template-columns: 774.700px 383.300px; gap: 16px; margin-top: 40px; align-items: start; }
.blank { height: 84px; position: relative; overflow: hidden; }
.lifted { transform: translateY(-6px) scale(1.011, 1.018); box-shadow: 0 16px 48px rgba(59, 130, 246, .15); }
.lifted::before { content: ""; position: absolute; inset: 0 0 auto; height: 2px; background: linear-gradient(90deg, #3b82f6, #a060e8, #4a86ee 76%, #06a6d4); opacity: .85; }
.head { margin: 0; height: 82px; padding: 26px 0 8px 2px; border-bottom: 2px solid #e2e8f0; display: flex; align-items: center; gap: 8px; font: 700 22px Inter, sans-serif; color: #000; position: relative; }
.chart { overflow: visible; position: relative; }
.ctitle { font: 500 14.400px "Noto Sans CJK SC", sans-serif; fill: #31333f; }
.light { fill: #484a56; }
.axis { font: 600 12px Inter, sans-serif; fill: #808495; }
.axis-name { font: 600 14px Inter, sans-serif; fill: #808495; }
.legend { font: 500 12px Inter, sans-serif; fill: #1f222d; stroke: #1f222d; stroke-width: .2px; }
.soft { fill: #3b3d48; }
.pct { font: 500 10px Inter, sans-serif; }
.strong { font-weight: 700; }
.info { height: 195px; font: 500 14.400px/29px "Noto Sans CJK SC", sans-serif; color: #000; -webkit-text-stroke: .2px #000; }
.info p { margin: 0; padding-top: 16.500px; }
.info ul { margin: 12px 0 0; padding-left: 23px; list-style: none; }
.info li { position: relative; }
.info li::before { content: ""; position: absolute; left: -22px; top: 14px; width: 5px; height: 5px; border-radius: 50%; background: #000; }
.thumb { position: absolute; right: 2px; top: 209px; width: 6px; height: 308px; border-radius: 3px; background: #a9a9ac; }
.arrow { position: absolute; right: 0; bottom: 3px; }

/* taskbar */
.taskbar { height: 40px; flex: none; display: flex; background: linear-gradient(90deg, #10191b, #121819 22%, #1e1a18 36%, #211c19 65%, #191a1a 76%, #1b1919); color: #fff; }
.start { width: 48px; display: grid; place-items: center; }
.search { width: 288px; background: #3d4446; border: 1px solid #6a7072; display: flex; align-items: center; padding-left: 11px; font-size: 15px; color: #dfe1e2; letter-spacing: -.55px; position: relative; }
.search span { margin-left: 11px; }
.books { position: absolute; right: 0; bottom: 0; }
.apps { display: flex; }
.app { width: 49.060px; display: grid; place-items: center; position: relative; }
.app svg { overflow: visible; }
.app:first-child { width: 50px; padding-right: 1px; }
.run::after { content: ""; position: absolute; left: 4px; right: 5px; bottom: 0; height: 2px; background: #76a0bf; }
.split::after { background: linear-gradient(90deg, #76a0bf 78%, #4d6578 78%); }
.current { background: #27343a; }
.current::after { left: 0; right: 0; }
.badge { font: 600 10px "Open Sans", sans-serif; fill: #fff; }
.sony { font: bold 6px "Liberation Serif", serif; fill: #fff; }
.liv { font: bold 11px "Open Sans", sans-serif; fill: #fdb52b; }
.hot { font: 6px "Open Sans", sans-serif; fill: #e5e5e5; }
.it { font-style: italic; font-weight: bold; }
.tray { margin-left: auto; display: flex; align-items: center; padding-right: 24px; }
.t1 { margin-right: 11px; }
.t2 { margin-right: 10px; }
.t3 { margin-right: 10px; }
.t4 { margin-right: 10px; }
.t5 { margin-right: 9px; }
.lang { width: 24px; font-size: 12px; letter-spacing: -.5px; }
.clock { width: 76px; margin: 0 10.500px 0 2px; text-align: center; font-size: 12px; line-height: 18px; letter-spacing: -.4px; display: flex; flex-direction: column; }
```
